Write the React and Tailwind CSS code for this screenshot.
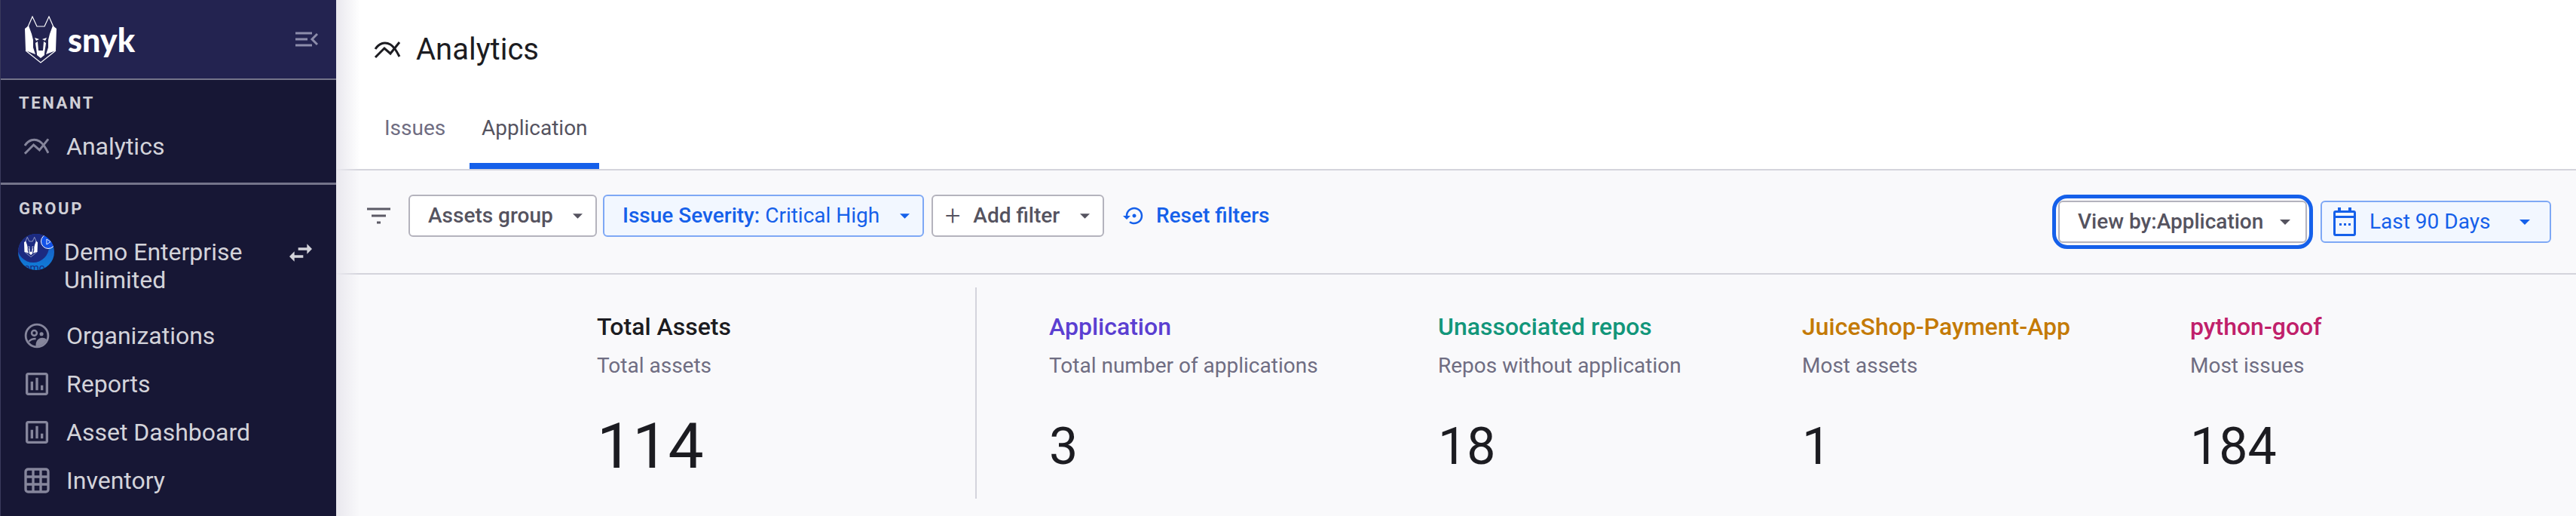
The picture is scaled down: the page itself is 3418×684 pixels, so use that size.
const font = { fontFamily: "Roboto, sans-serif" };

const AnalyticsIcon = ({ className }) => (
  <svg viewBox="0 0 34 24" fill="none" stroke="currentColor" strokeWidth="3" className={className}>
    <path d="M1 22 L13 10 L21 17 L33 2" />
    <path d="M1 11 C6 3 14 1 21 5 C26 8 30 15 33 21" />
  </svg>
);

const Md = ({ d, className }) => (
  <svg viewBox="0 0 24 24" fill="currentColor" className={className}>
    <path d={d} />
  </svg>
);

const Caret = ({ className }) => (
  <svg viewBox="0 0 10 5" fill="currentColor" className={className}>
    <path d="M0 0h10L5 5z" />
  </svg>
);

const DogLogo = ({ className, bg = "#232350" }) => (
  <svg viewBox="0 0 42 63" className={className}>
    <path d="M3 17 L10 1 L16 14 L26 14 L32 1 L39 17" fill={bg} stroke="#fff" strokeWidth="1.2" />
    <path d="M1 46 L21 62 L41 46" fill="none" stroke="#fff" strokeWidth="1.2" />
    <path d="M0 17 L5 13 L9 24 L11 32 L11 42 L14 51 L1 46 Z" fill="#fff" />
    <path d="M42 17 L37 13 L33 24 L31 32 L31 42 L28 51 L41 46 Z" fill="#fff" />
    <path d="M13 29 L19 31 L15 33 Z M29 29 L23 31 L27 33 Z" fill="#fff" />
    <path d="M14 36 C15 44 16 48 16 52 L21 56 L26 52 C26 48 27 44 28 36 L25 34 L24 46 L18 46 L17 34 Z" fill="#fff" />
  </svg>
);

const OrgIcon = ({ className }) => (
  <svg viewBox="0 0 24 24" fill="none" stroke="currentColor" className={className}>
    <circle cx="12" cy="12" r="10.5" strokeWidth="2" />
    <circle cx="9.5" cy="9.5" r="2.4" strokeWidth="1.8" />
    <circle cx="16.3" cy="10.4" r="1.8" fill="currentColor" stroke="none" />
    <path d="M4.5 17.5 C6 15.5 8 14.8 11 14.8" strokeWidth="1.8" />
    <path d="M11 22 C10.5 17 13.5 14 17 14 C18.5 14 20 14.5 21 15.5 C19.5 19.5 15.5 22 11 22 Z" fill="currentColor" stroke="none" />
  </svg>
);

const report = "M19 3H5c-1.1 0-2 .9-2 2v14c0 1.1.9 2 2 2h14c1.1 0 2-.9 2-2V5c0-1.1-.9-2-2-2zm0 16H5V5h14v14zM7 10h2v7H7zm4-3h2v10h-2zm4 6h2v4h-2z";
const grid = "M5 2h14a3 3 0 0 1 3 3v14a3 3 0 0 1-3 3H5a3 3 0 0 1-3-3V5a3 3 0 0 1 3-3zm-1 3v3h4V4H5a1 1 0 0 0-1 1zm6-1v4h4V4h-4zm6 0v4h4V5a1 1 0 0 0-1-1h-3zM4 10v4h4v-4H4zm6 0v4h4v-4h-4zm6 0v4h4v-4h-4zM4 16v3a1 1 0 0 0 1 1h3v-4H4zm6 0v4h4v-4h-4zm6 0v4h3a1 1 0 0 0 1-1v-3h-4z";
const swap = "M6.99 11L3 15l3.99 4v-3H14v-2H6.99v-3zM21 9l-3.99-4v3H10v2h7.01v3L21 9z";
const restore = "M14 12c0-1.1-.9-2-2-2s-2 .9-2 2 .9 2 2 2 2-.9 2-2zm-2-9c-4.97 0-9 4.03-9 9H0l4 4 4-4H5c0-3.87 3.13-7 7-7s7 3.13 7 7-3.13 7-7 7c-1.51 0-2.91-.49-4.06-1.3l-1.42 1.44C8.04 20.3 9.94 21 12 21c4.97 0 9-4.03 9-9s-4.03-9-9-9z";

const NavItem = ({ icon, label }) => (
  <div className="flex h-16 items-center pl-[31px]">
    <span className="flex w-[56px] items-center text-[#86869c]">{icon}</span>
    <span className="text-[32px] text-[#d3d3da]">{label}</span>
  </div>
);

const navIcon = "h-[40px] w-[40px] -ml-[3px]";

const Sidebar = () => (
  <aside className="relative z-10 flex h-[684px] w-[446px] shrink-0 flex-col overflow-hidden border-l border-[#3a3a5c] bg-[#171735]">
    <div className="flex h-[106px] shrink-0 items-center justify-between border-b-2 border-[#74748a] bg-[#232350] pl-[32px] pr-[24px]">
      <div className="flex items-center gap-[15px]">
        <DogLogo className="h-[63px] w-[42px]" />
        <span className="text-[43px] leading-none font-black text-white" style={{ fontFamily: "Lato, sans-serif" }}>snyk</span>
      </div>
      <svg viewBox="0 0 30 20" fill="none" stroke="#8d8dab" strokeWidth="3" className="h-[20px] w-[30px]">
        <path d="M0 2h22M0 10h16M0 18h22M29 3l-7 7 7 7" />
      </svg>
    </div>
    <div className="flex h-[139px] shrink-0 flex-col border-b-[3px] border-[#74748a] pl-[24px]">
      <div className="mt-[18px] text-[22px] leading-[26px] font-bold tracking-[2.6px] text-[#cfcfd6]">TENANT</div>
      <div className="mt-[24px] flex items-center pl-[7px]">
        <span className="flex w-[56px]">
          <AnalyticsIcon className="h-[24px] w-[33px] text-[#86869c]" />
        </span>
        <span className="text-[32px] leading-[40px] text-[#d3d3da]">Analytics</span>
      </div>
    </div>
    <div className="pl-[24px] pt-[19px] text-[22px] leading-[26px] font-bold tracking-[2.6px] text-[#cfcfd6]">GROUP</div>
    <div className="flex items-start pl-[23px] pr-[27px] pt-[20px]">
      <div className="relative h-[48px] w-[48px] shrink-0 overflow-hidden rounded-full bg-gradient-to-b from-[#1a4fc0] to-[#0f7fd8]">
        <div className="absolute left-[-1px] top-[-4px] h-[42px] w-[42px] rounded-full bg-[#1c2a80]" />
        <DogLogo bg="#1c2a80" className="absolute left-[8px] top-[3px] h-[29px] w-[18px]" />
        <div className="absolute bottom-[-4px] left-[8px] text-[14px] leading-none text-[#1c2a80]">emo</div>
        <div className="absolute right-[-2px] top-[0px] flex h-[20px] w-[20px] items-center justify-center rounded-full border border-white bg-[#1453e8]">
          <svg viewBox="0 0 8 10" fill="none" stroke="#fff" strokeWidth="1" className="h-[9px] w-[7px]"><path d="M1 1l6 4-6 4z" /></svg>
        </div>
      </div>
      <div className="ml-[13px] mt-[6px] flex-1 text-[32px] leading-[37px] text-[#d3d3da]">Demo Enterprise Unlimited</div>
      <Md d={swap} className="mt-[5px] h-[40px] w-[40px] shrink-0 text-[#d3d3da]" />
    </div>
    <div className="mt-[23px] flex flex-col">
      <NavItem icon={<OrgIcon className="h-[34px] w-[34px]" />} label="Organizations" />
      <NavItem icon={<Md d={report} className={navIcon} />} label="Reports" />
      <NavItem icon={<Md d={report} className={navIcon} />} label="Asset Dashboard" />
      <NavItem icon={<Md d={grid} className={navIcon} />} label="Inventory" />
    </div>
  </aside>
);

const Chip = ({ children, className = "" }) => (
  <div className={`flex h-[56px] items-center rounded-[6px] border-2 text-[28px] font-medium ${className}`}>
    {children}
  </div>
);

const Stat = ({ title, color, sub, value, className = "" }) => (
  <div className={`shrink-0 ${className}`}>
    <div className={`text-[32px] leading-[38px] font-medium ${color}`}>{title}</div>
    <div className="mt-[15px] text-[28px] leading-[36px] text-[#6f6d82]">{sub}</div>
    <div className="mt-[48px] text-[68px] leading-[82px] text-[#1c1c21]">{value}</div>
  </div>
);

const Toolbar = () => (
  <div className="flex h-[138px] shrink-0 items-start justify-between border-b-2 border-[#d4d4dc] pl-[41px] pr-[33px]">
    <div className="flex items-center pt-[32px]">
      <svg viewBox="0 0 31 22" fill="none" stroke="#5c5a66" strokeWidth="3" className="h-[22px] w-[31px]">
        <path d="M0 2h31M6 11h19M13 20h5" />
      </svg>
      <Chip className="ml-[24px] w-[250px] justify-between border-[#b4b3bd] bg-white pl-[24px] pr-[17px] text-[#55535f]">
        Assets group
        <Caret className="h-[7px] w-[13px] text-[#55535f]" />
      </Chip>
      <Chip className="ml-[8px] w-[426px] justify-between border-[#7ea8f5] bg-[#f2f7ff] pl-[24px] pr-[17px] font-normal text-[#1560ea]">
        <span><span className="font-medium">Issue Severity:</span> Critical High</span>
        <Caret className="h-[7px] w-[13px]" />
      </Chip>
      <Chip className="ml-[10px] w-[229px] border-[#b4b3bd] bg-white pl-[16px] pr-[17px] text-[#55535f]">
        <span className="text-[36px] leading-none font-light">+</span>
        <span className="ml-[17px] flex-1">Add filter</span>
        <Caret className="h-[7px] w-[13px] text-[#55535f]" />
      </Chip>
      <div className="ml-[25px] flex items-center gap-[14px] text-[28px] font-medium text-[#1560ea]">
        <Md d={restore} className="h-[30px] w-[30px]" />
        Reset filters
      </div>
    </div>
    <div className="flex items-center pt-[40px]">
      <div className="rounded-[12px] outline-[5px] outline-[#1560ea] outline-offset-[3px]">
        <Chip className="h-[55px] w-[330px] justify-between border-[#b4b3bd] bg-white pl-[24px] pr-[20px] text-[#55535f]">
          View by:Application
          <Caret className="h-[7px] w-[14px]" />
        </Chip>
      </div>
      <Chip className="ml-[18px] h-[55px] w-[306px] border-[#7ea8f5] bg-[#f2f7ff] pl-[15px] pr-[26px] font-normal text-[#1560ea]">
        <svg viewBox="0 0 30 38" fill="currentColor" className="h-[38px] w-[30px]">
          <path d="M6 0h4v4h10V0h4v4h3a3 3 0 0 1 3 3v28a3 3 0 0 1-3 3H3a3 3 0 0 1-3-3V7a3 3 0 0 1 3-3h3V0zM3 14v21h24V14H3zm0-3h24V7H3v4zM8 21h3v3H8zm6 0h3v3h-3zm6 0h3v3h-3z" />
        </svg>
        <span className="ml-[18px] flex-1">Last 90 Days</span>
        <Caret className="h-[7px] w-[14px]" />
      </Chip>
    </div>
  </div>
);

export default function App() {
  return (
    <div className="flex h-[684px] w-[3418px] overflow-hidden bg-[#f9f9fb]" style={font}>
      <Sidebar />
      <main className="relative flex min-w-0 flex-1 flex-col">
        <div className="pointer-events-none absolute inset-y-0 left-0 w-[32px] bg-gradient-to-r from-[#e9e8ee] to-transparent" />
        <div className="box-content h-[224px] shrink-0 border-b-2 border-[#d4d4dc] bg-white">
          <div className="flex h-[130px] items-center pl-[48px] pt-[2px]">
            <AnalyticsIcon className="h-[24px] w-[40px] text-[#1c1c21]" />
            <span className="ml-[18px] text-[40px] text-[#1c1c21]">Analytics</span>
          </div>
          <div className="flex h-[94px] pl-[64px] text-[28px]">
            <div className="flex h-full items-center pb-[15px] pr-[32px] text-[#6f6d82]">Issues</div>
            <div className="flex h-full w-[172px] items-center justify-center border-b-[8px] border-[#1560ea] pb-[7px] text-[#55535f]">Application</div>
          </div>
        </div>
        <Toolbar />
        <div className="flex flex-1 pt-[17px]">
          <Stat title="Total Assets" color="text-[#1c1c21]" sub="Total assets" value={<span className="text-[84px] leading-[82px]">114</span>} className="ml-[346px] w-[502px] pt-[33px]" />
          <div className="h-[280px] w-[2px] shrink-0 bg-[#d4d4dc]" />
          <div className="ml-[96px] flex pt-[33px]">
            <Stat title="Application" color="text-[#5b3fd1]" sub="Total number of applications" value="3" className="w-[516px]" />
            <Stat title="Unassociated repos" color="text-[#12967a]" sub="Repos without application" value="18" className="w-[483px]" />
            <Stat title="JuiceShop-Payment-App" color="text-[#c47a05]" sub="Most assets" value="1" className="w-[515px]" />
            <Stat title="python-goof" color="text-[#c0206a]" sub="Most issues" value="184" />
          </div>
        </div>
      </main>
    </div>
  );
}
